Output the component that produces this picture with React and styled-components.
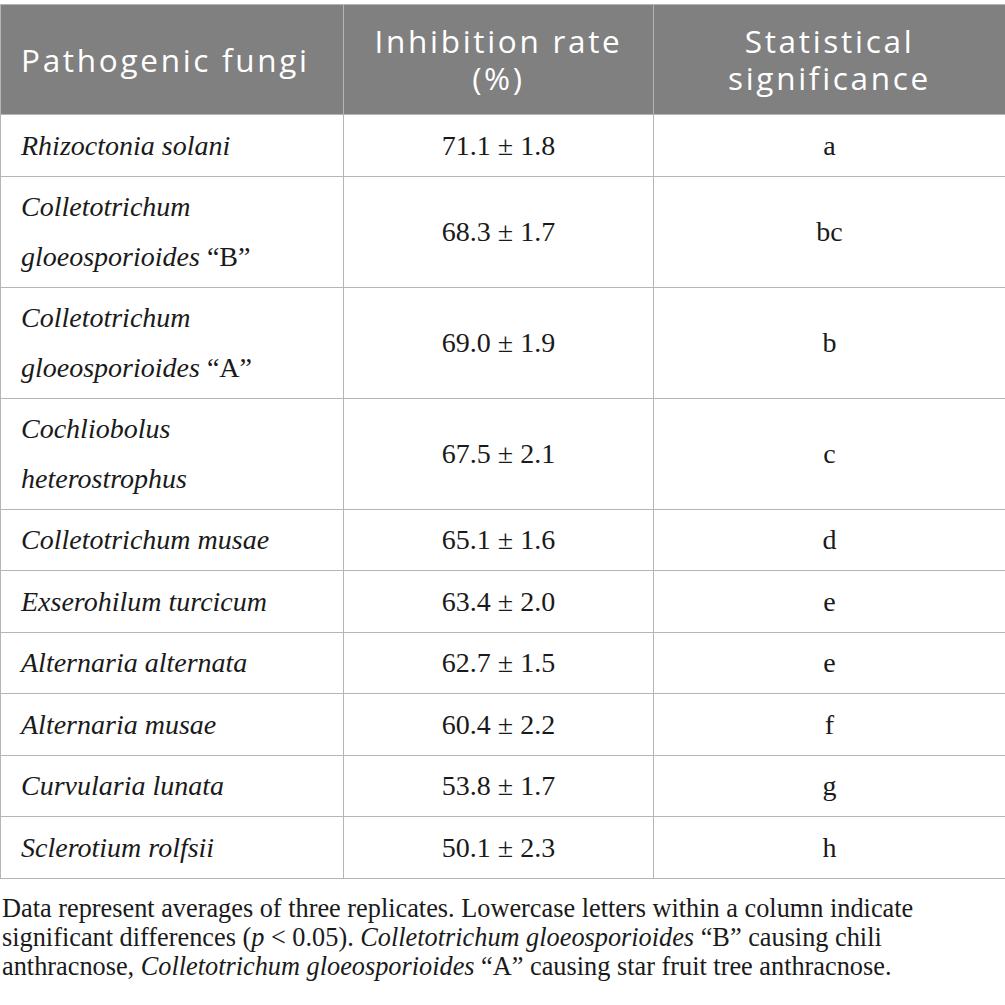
import React from "react";
import styled, {createGlobalStyle} from "styled-components";

const GlobalStyle = createGlobalStyle`
    * {
        box-sizing: border-box;
    }
    body {
        margin: 0;
        background: #ffffff;
        color: #1a1a1a;
        font-family: "Liberation Serif", "Times New Roman", serif;
    }
`;

const Page = styled.div`
    padding-top: 4px;
    width: 1005px;
`;

const Table = styled.table`
    width: 1005px;
    border-collapse: collapse;
    table-layout: fixed;
`;

const HeadCell = styled.th`
    background: #808080;
    color: #ffffff;
    font-family: "Open Sans", "Liberation Sans", sans-serif;
    font-weight: 400;
    font-size: 31.5px;
    letter-spacing: 2.7px;
    line-height: 37px;
    padding: 17px 20px 18px;
    text-align: ${p => p.$align || "center"};
    vertical-align: middle;
    border: 1px solid #b5b5b5;
`;

const Cell = styled.td`
    font-size: 28px;
    line-height: 49.5px;
    padding: 5.5px 20px;
    text-align: ${p => p.$align || "center"};
    font-style: ${p => (p.$italic ? "italic" : "normal")};
    vertical-align: middle;
    border: 1px solid #b5b5b5;
`;

const Upright = styled.span`
    font-style: normal;
`;

const Note = styled.p`
    margin: 15px 0 0 2px;
    font-size: 26.3px;
    line-height: 29px;
    color: #1a1a1a;
    white-space: nowrap;
`;

const rows = [
    {name: ["Rhizoctonia solani"], rate: "71.1 ± 1.8", sig: "a"},
    {name: ["Colletotrichum", <>gloeosporioides <Upright>“B”</Upright></>], rate: "68.3 ± 1.7", sig: "bc"},
    {name: ["Colletotrichum", <>gloeosporioides <Upright>“A”</Upright></>], rate: "69.0 ± 1.9", sig: "b"},
    {name: ["Cochliobolus", "heterostrophus"], rate: "67.5 ± 2.1", sig: "c"},
    {name: ["Colletotrichum musae"], rate: "65.1 ± 1.6", sig: "d"},
    {name: ["Exserohilum turcicum"], rate: "63.4 ± 2.0", sig: "e"},
    {name: ["Alternaria alternata"], rate: "62.7 ± 1.5", sig: "e"},
    {name: ["Alternaria musae"], rate: "60.4 ± 2.2", sig: "f"},
    {name: ["Curvularia lunata"], rate: "53.8 ± 1.7", sig: "g"},
    {name: ["Sclerotium rolfsii"], rate: "50.1 ± 2.3", sig: "h"},
];

const App = () => {
    return <>
        <GlobalStyle/>
        <Page>
            <Table>
                <colgroup>
                    <col style={{width: 343}}/>
                    <col style={{width: 310}}/>
                    <col style={{width: 352}}/>
                </colgroup>
                <thead>
                    <tr>
                        <HeadCell $align="left">Pathogenic fungi</HeadCell>
                        <HeadCell>Inhibition rate<br/>(%)</HeadCell>
                        <HeadCell>Statistical<br/>significance</HeadCell>
                    </tr>
                </thead>
                <tbody>
                    {rows.map((r, i) => (
                        <tr key={i}>
                            <Cell $align="left" $italic>
                                {r.name.map((part, j) => (
                                    <React.Fragment key={j}>{j > 0 && <br/>}{part}</React.Fragment>
                                ))}
                            </Cell>
                            <Cell>{r.rate}</Cell>
                            <Cell>{r.sig}</Cell>
                        </tr>
                    ))}
                </tbody>
            </Table>
            <Note>
                Data represent averages of three replicates. Lowercase letters within a column indicate<br/>
                significant differences (<i>p</i> &lt; 0.05). <i>Colletotrichum gloeosporioides</i> “B” causing chili<br/>
                anthracnose, <i>Colletotrichum gloeosporioides</i> “A” causing star fruit tree anthracnose.
            </Note>
        </Page>
    </>;
};

export default App;
